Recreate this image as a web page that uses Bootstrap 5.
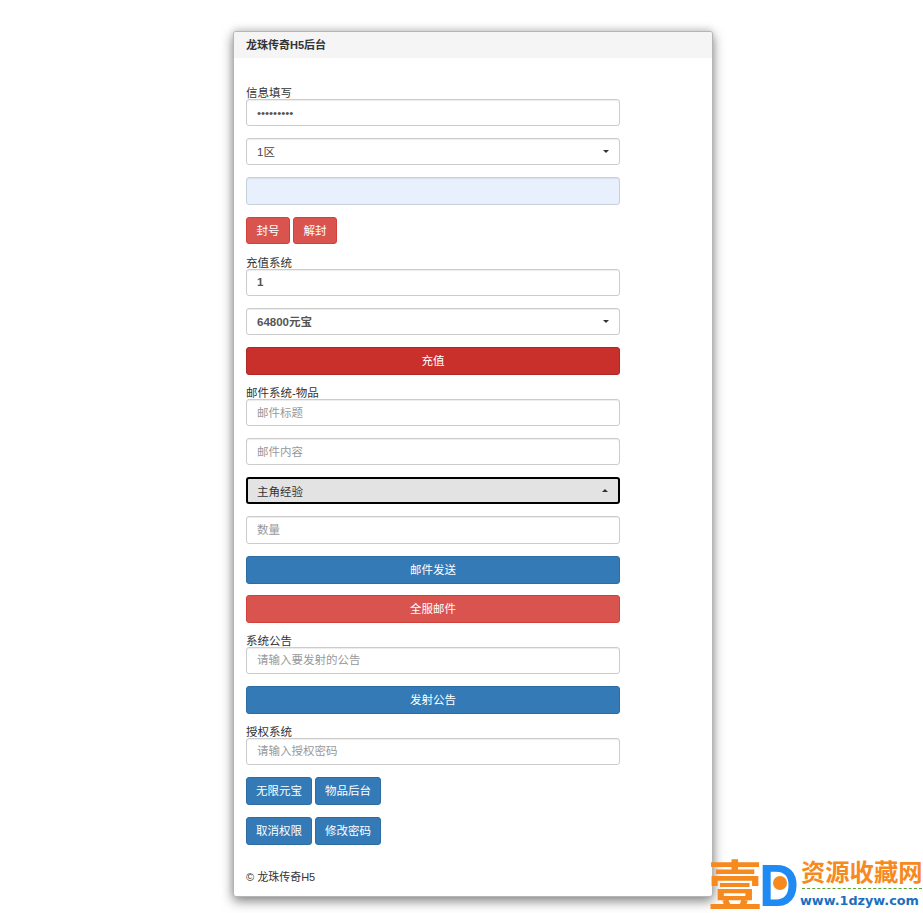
<!DOCTYPE html>
<html lang="zh">
<head>
<meta charset="utf-8">
<title>龙珠传奇H5后台</title>
<link href="https://cdn.jsdelivr.net/npm/bootstrap@5.3.0/dist/css/bootstrap.min.css" rel="stylesheet">
<style>
html,body{height:913px;overflow:hidden}
body{background:#fff;font-family:"Liberation Sans","Noto Sans CJK SC",sans-serif;font-size:11.5px;color:#333;padding-top:31px;position:relative}
.admin-card{width:480px;height:866px;margin-left:233px;border:1px solid #b5b5b5;border-radius:3px;box-shadow:0 4px 12px rgba(0,0,0,.5),0 -3px 6px rgba(0,0,0,.08);background:#fff;overflow:hidden}
.admin-head{height:26px;line-height:26px;background:#f5f5f5;padding:0 12px;font-weight:700;font-size:11px;color:#333}
.admin-body{padding:28px 12px 0;height:800px}
.admin-form{width:374px}
.sec-label{display:block;height:13px;line-height:14px;font-size:11.5px;color:#333;margin:0}
.fld{height:27.2px;margin-bottom:12px;font-size:11.5px;color:#555;border:1px solid #ccc;border-radius:3px;padding:0 10px;line-height:25px;box-shadow:inset 0 1px 1px rgba(0,0,0,.075);min-height:0}
.fld::placeholder{color:#999}
.fld.form-select{padding-top:1px;padding-right:20px;background-size:6px 3px;background-position:right 10px center;background-image:url("data:image/svg+xml,%3csvg xmlns='http://www.w3.org/2000/svg' viewBox='0 0 8 4'%3e%3cpath fill='%23333' d='M0 0h8L4 4z'/%3e%3c/svg%3e");color:#444}
.fld.strong{font-weight:700;color:#555}
.fld.auto{background:#e8f0fe;border-color:#c6d2d8}
.fld.opened,.fld.opened:focus{background-color:#e3e3e3;border:2px solid #000;box-shadow:none;color:#333;padding-left:9px;background-image:url("data:image/svg+xml,%3csvg xmlns='http://www.w3.org/2000/svg' viewBox='0 0 8 4'%3e%3cpath fill='%23333' d='M0 4h8L4 0z'/%3e%3c/svg%3e")}
.act{height:28px;margin-bottom:11.5px;font-size:11.5px;line-height:26px;padding:0 9px;border-radius:3px;color:#fff;display:block}
.act.w-100{margin-bottom:11px}
.act.sm-act{height:27.6px;margin-bottom:11.4px;padding:0 9.5px}
.act-blue{background:#337ab7;border:1px solid #2e6da4}
.act-red{background:#d9534f;border:1px solid #d43f3a}
.act-dark{background:#c9302c;border:1px solid #ac2925}
.act-blue:hover,.act-red:hover,.act-dark:hover{color:#fff}
.act-row{gap:3px}
.copy-line{font-size:11px;color:#333;margin-top:14px;line-height:14px}
.mark-wrap{position:absolute;left:710px;top:857px;width:213px;height:56px}
.mark-hz{position:absolute;left:-2px;top:-1px;font:700 54px/54px "Noto Sans CJK SC",sans-serif;color:#f68a1e}
.mark-d{position:absolute;left:49px;top:2px;font:700 60px/54px "Liberation Sans",sans-serif;color:#1e8af2;transform:scaleX(.92);transform-origin:left center}
.mark-dot{position:absolute;left:63px;top:19px;width:14px;height:14px;border-radius:50%;background:#f68a1e}
.mark-cn{position:absolute;left:91px;top:0;font:700 24.3px/28px "Noto Sans CJK SC",sans-serif;color:#f68a1e;white-space:nowrap}
.mark-dash{position:absolute;left:92px;top:31px;width:120px;border-top:1px dashed #5aa832}
.mark-url{position:absolute;left:90px;top:35px;font:700 12.8px/18px "DejaVu Sans",sans-serif;color:#1a6fc0;white-space:nowrap}
</style>
</head>
<body>
<div class="admin-card">
  <div class="admin-head">龙珠传奇H5后台</div>
  <div class="admin-body">
    <form class="admin-form">
      <label class="sec-label">信息填写</label>
      <input class="form-control fld" type="password" value="*********">
      <select class="form-select fld"><option>1区</option></select>
      <input class="form-control fld auto" type="text">
      <div class="d-flex act-row">
        <button type="button" class="btn act sm-act act-red">封号</button>
        <button type="button" class="btn act sm-act act-red">解封</button>
      </div>

      <label class="sec-label">充值系统</label>
      <input class="form-control fld strong" type="text" value="1">
      <select class="form-select fld strong"><option>64800元宝</option></select>
      <button type="button" class="btn act act-dark w-100">充值</button>

      <label class="sec-label">邮件系统-物品</label>
      <input class="form-control fld" type="text" placeholder="邮件标题">
      <input class="form-control fld" type="text" placeholder="邮件内容">
      <select class="form-select fld opened"><option>主角经验</option></select>
      <input class="form-control fld" type="text" placeholder="数量">
      <button type="button" class="btn act act-blue w-100">邮件发送</button>
      <button type="button" class="btn act act-red w-100">全服邮件</button>

      <label class="sec-label">系统公告</label>
      <input class="form-control fld" type="text" placeholder="请输入要发射的公告">
      <button type="button" class="btn act act-blue w-100">发射公告</button>

      <label class="sec-label">授权系统</label>
      <input class="form-control fld" type="text" placeholder="请输入授权密码">
      <div class="d-flex act-row">
        <button type="button" class="btn act act-blue">无限元宝</button>
        <button type="button" class="btn act act-blue">物品后台</button>
      </div>
      <div class="d-flex act-row">
        <button type="button" class="btn act act-blue">取消权限</button>
        <button type="button" class="btn act act-blue">修改密码</button>
      </div>
    </form>
    <div class="copy-line">© 龙珠传奇H5</div>
  </div>
</div>
<div class="mark-wrap">
  <span class="mark-hz">壹</span>
  <span class="mark-d">D</span>
  <span class="mark-dot"></span>
  <span class="mark-cn">资源收藏网</span>
  <span class="mark-dash"></span>
  <span class="mark-url">www.1dzyw.com</span>
</div>
</body>
</html>
